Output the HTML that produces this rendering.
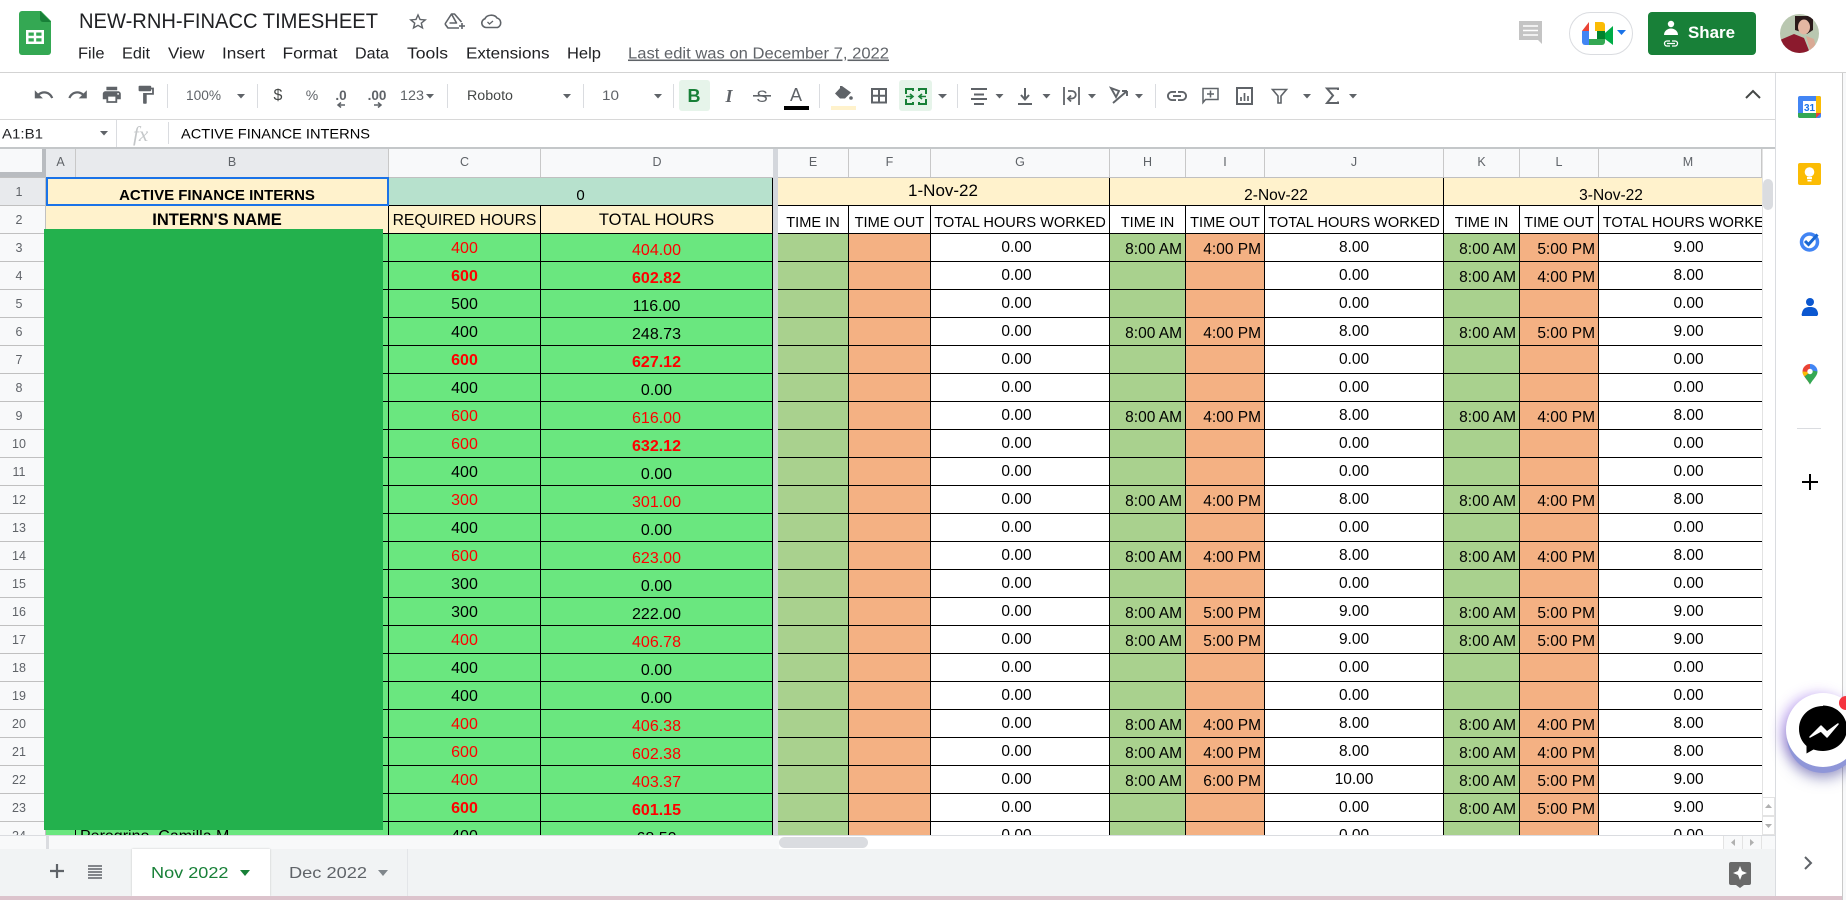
<!DOCTYPE html>
<html><head><meta charset="utf-8"><title>NEW-RNH-FINACC TIMESHEET</title>
<style>
*{box-sizing:border-box}
html,body{margin:0;padding:0;width:1846px;height:900px;overflow:hidden;background:#fff;font-family:"Liberation Sans",sans-serif;color:#000}
.a{position:absolute}
#rh{left:0;top:178px;width:46px;height:657px;overflow:hidden;background:#f8f9fa;border-right:1px solid #c0c0c0}
#rh div{height:28px;border-bottom:1px solid #c0c0c0;font-size:12.5px;color:#5f6368;line-height:28px;text-align:center;width:46px;padding-right:8px}
#ch{left:0;top:149px;width:1775px;height:29px;background:#f8f9fa;border-bottom:1px solid #c0c0c0;font-size:12.5px;color:#5f6368}
#ch div{position:absolute;top:0;height:28px;line-height:27px;text-align:center;border-right:1px solid #c8c8c8}
.tb{position:absolute;overflow:hidden}
table{border-collapse:separate;border-spacing:0;table-layout:fixed}
td{height:28px;padding:0;border-right:1px solid #000;border-bottom:1px solid #000;vertical-align:top;text-align:center;line-height:16px;overflow:hidden;white-space:nowrap}
#L td{font-size:16px;background:#6ae77f;padding-top:7px}
#L tr td:nth-child(4){padding-top:9px}
#L td.n{color:#000}
#L td.r{color:#f00}
#L td.b{color:#f00;font-weight:bold}
#L tr.h td{background:#fff2cc}
#L .bb{font-weight:bold}
#R td{font-size:15.5px;padding-top:8px;background:#fff}
#R tr td:nth-child(3n+1){background:#a9d18e;text-align:right;padding-right:3px}
#R tr td:nth-child(3n+2){background:#f4b183;text-align:right;padding-right:3px}
#R tr td:nth-child(3n){padding-top:6px}
#R tr td:nth-child(3){padding-right:7px}
#R tr.h1 td{background:#fff2cc!important;text-align:center!important;padding-right:1px!important;padding-top:10px!important;font-size:15.5px}
#R tr.h2 td{background:#fff!important;text-align:center!important;padding:9px 0 0!important;font-size:14.6px}
</style></head><body>

<div class="a" style="left:0;top:72px;width:1846px;height:1px;background:#d3d3d3"></div>
<div class="a" style="left:0;top:119px;width:1775px;height:1px;background:#d8d8d8"></div>
<div class="a" style="left:0;top:147px;width:1775px;height:2px;background:#c4c7c9"></div>
<div class="a" style="left:679px;top:80px;width:31px;height:31px;background:#e6f4ea;border-radius:3px"></div>
<div class="a" style="left:899px;top:80px;width:33px;height:31px;background:#e6f4ea;border-radius:3px"></div>
<div class="a" style="left:1648px;top:12px;width:108px;height:43px;background:#188038;border-radius:4px"></div>
<div class="a" style="left:1569px;top:12px;width:64px;height:43px;border:1px solid #dadce0;border-radius:22px"></div>

<div id="ch" class="a">
<div style="left:0;width:46px;background:#f8f9fa;border:0"></div>
<div style="left:46px;width:30px;background:#e8eaed">A</div>
<div style="left:76px;width:313px;background:#e8eaed">B</div>
<div style="left:389px;width:152px">C</div>
<div style="left:541px;width:232px;border-right:0">D</div>
<div style="left:778px;width:71px">E</div>
<div style="left:849px;width:82px">F</div>
<div style="left:931px;width:179px">G</div>
<div style="left:1110px;width:76px">H</div>
<div style="left:1186px;width:79px">I</div>
<div style="left:1265px;width:179px">J</div>
<div style="left:1444px;width:76px">K</div>
<div style="left:1520px;width:79px">L</div>
<div style="left:1599px;width:163px;padding-left:16px">M</div>
</div>
<div class="a" style="left:42px;top:149px;width:4px;height:28px;background:#b9bcc0"></div>
<div class="a" style="left:0;top:172px;width:46px;height:5px;background:#b9bcc0"></div>

<div id="rh" class="a">
<div style="background:#e8eaed">1</div><div>2</div><div>3</div><div>4</div><div>5</div><div>6</div><div>7</div><div>8</div><div>9</div><div>10</div><div>11</div><div>12</div><div>13</div><div>14</div><div>15</div><div>16</div><div>17</div><div>18</div><div>19</div><div>20</div><div>21</div><div>22</div><div>23</div><div>24</div>
</div>

<div id="L" class="tb" style="left:46px;top:178px;width:727px;height:657px">
<table style="width:727px"><colgroup><col style="width:30px"><col style="width:313px"><col style="width:152px"><col style="width:232px"></colgroup>
<tr class="h"><td colspan="2" class="bb" style="font-size:15px;padding-top:10px">ACTIVE FINANCE INTERNS</td><td colspan="2" style="background:#b7e1cd;padding-top:10px;font-size:15px">0</td></tr>
<tr class="h"><td colspan="2" class="bb" style="font-size:16.5px;padding-top:6px">INTERN'S NAME</td><td style="padding-top:7px;font-size:15.7px">REQUIRED HOURS</td><td style="padding-top:6px;font-size:16.5px">TOTAL HOURS</td></tr>
<tr><td></td><td></td><td class="r">400</td><td class="r">404.00</td></tr>
<tr><td></td><td></td><td class="b">600</td><td class="b">602.82</td></tr>
<tr><td></td><td></td><td class="n">500</td><td class="n">116.00</td></tr>
<tr><td></td><td></td><td class="n">400</td><td class="n">248.73</td></tr>
<tr><td></td><td></td><td class="b">600</td><td class="b">627.12</td></tr>
<tr><td></td><td></td><td class="n">400</td><td class="n">0.00</td></tr>
<tr><td></td><td></td><td class="r">600</td><td class="r">616.00</td></tr>
<tr><td></td><td></td><td class="r">600</td><td class="b">632.12</td></tr>
<tr><td></td><td></td><td class="n">400</td><td class="n">0.00</td></tr>
<tr><td></td><td></td><td class="r">300</td><td class="r">301.00</td></tr>
<tr><td></td><td></td><td class="n">400</td><td class="n">0.00</td></tr>
<tr><td></td><td></td><td class="r">600</td><td class="r">623.00</td></tr>
<tr><td></td><td></td><td class="n">300</td><td class="n">0.00</td></tr>
<tr><td></td><td></td><td class="n">300</td><td class="n">222.00</td></tr>
<tr><td></td><td></td><td class="r">400</td><td class="r">406.78</td></tr>
<tr><td></td><td></td><td class="n">400</td><td class="n">0.00</td></tr>
<tr><td></td><td></td><td class="n">400</td><td class="n">0.00</td></tr>
<tr><td></td><td></td><td class="r">400</td><td class="r">406.38</td></tr>
<tr><td></td><td></td><td class="r">600</td><td class="r">602.38</td></tr>
<tr><td></td><td></td><td class="r">400</td><td class="r">403.37</td></tr>
<tr><td></td><td></td><td class="b">600</td><td class="b">601.15</td></tr>
<tr><td style="border-right:1px solid #000"></td><td style="text-align:left;padding-left:4px">Peregrino, Camilla M.</td><td class="n">400</td><td class="n">68.50</td></tr>
</table>
</div>
<div class="a" style="left:46px;top:177px;width:343px;height:29px;border:2px solid #1a73e8"></div>
<div class="a" style="left:44px;top:229px;width:339px;height:601px;background:#23b14d"></div>
<div class="a" style="left:773px;top:149px;width:5px;height:686px;background:#d4d7dc"></div>

<div id="R" class="tb" style="left:778px;top:178px;width:984px;height:657px">
<table style="width:1001px"><colgroup><col style="width:71px"><col style="width:82px"><col style="width:179px"><col style="width:76px"><col style="width:79px"><col style="width:179px"><col style="width:76px"><col style="width:79px"><col style="width:180px"></colgroup>
<tr class="h1"><td colspan="3" style="font-size:17px;padding-top:5px!important">1-Nov-22</td><td colspan="3">2-Nov-22</td><td colspan="3" style="border-right:0">3-Nov-22</td></tr>
<tr class="h2"><td>TIME IN</td><td>TIME OUT</td><td>TOTAL HOURS WORKED</td><td>TIME IN</td><td>TIME OUT</td><td>TOTAL HOURS WORKED</td><td>TIME IN</td><td>TIME OUT</td><td>TOTAL HOURS WORKED</td></tr>
<tr><td></td><td></td><td>0.00</td><td>8:00 AM</td><td>4:00 PM</td><td>8.00</td><td>8:00 AM</td><td>5:00 PM</td><td>9.00</td></tr>
<tr><td></td><td></td><td>0.00</td><td></td><td></td><td>0.00</td><td>8:00 AM</td><td>4:00 PM</td><td>8.00</td></tr>
<tr><td></td><td></td><td>0.00</td><td></td><td></td><td>0.00</td><td></td><td></td><td>0.00</td></tr>
<tr><td></td><td></td><td>0.00</td><td>8:00 AM</td><td>4:00 PM</td><td>8.00</td><td>8:00 AM</td><td>5:00 PM</td><td>9.00</td></tr>
<tr><td></td><td></td><td>0.00</td><td></td><td></td><td>0.00</td><td></td><td></td><td>0.00</td></tr>
<tr><td></td><td></td><td>0.00</td><td></td><td></td><td>0.00</td><td></td><td></td><td>0.00</td></tr>
<tr><td></td><td></td><td>0.00</td><td>8:00 AM</td><td>4:00 PM</td><td>8.00</td><td>8:00 AM</td><td>4:00 PM</td><td>8.00</td></tr>
<tr><td></td><td></td><td>0.00</td><td></td><td></td><td>0.00</td><td></td><td></td><td>0.00</td></tr>
<tr><td></td><td></td><td>0.00</td><td></td><td></td><td>0.00</td><td></td><td></td><td>0.00</td></tr>
<tr><td></td><td></td><td>0.00</td><td>8:00 AM</td><td>4:00 PM</td><td>8.00</td><td>8:00 AM</td><td>4:00 PM</td><td>8.00</td></tr>
<tr><td></td><td></td><td>0.00</td><td></td><td></td><td>0.00</td><td></td><td></td><td>0.00</td></tr>
<tr><td></td><td></td><td>0.00</td><td>8:00 AM</td><td>4:00 PM</td><td>8.00</td><td>8:00 AM</td><td>4:00 PM</td><td>8.00</td></tr>
<tr><td></td><td></td><td>0.00</td><td></td><td></td><td>0.00</td><td></td><td></td><td>0.00</td></tr>
<tr><td></td><td></td><td>0.00</td><td>8:00 AM</td><td>5:00 PM</td><td>9.00</td><td>8:00 AM</td><td>5:00 PM</td><td>9.00</td></tr>
<tr><td></td><td></td><td>0.00</td><td>8:00 AM</td><td>5:00 PM</td><td>9.00</td><td>8:00 AM</td><td>5:00 PM</td><td>9.00</td></tr>
<tr><td></td><td></td><td>0.00</td><td></td><td></td><td>0.00</td><td></td><td></td><td>0.00</td></tr>
<tr><td></td><td></td><td>0.00</td><td></td><td></td><td>0.00</td><td></td><td></td><td>0.00</td></tr>
<tr><td></td><td></td><td>0.00</td><td>8:00 AM</td><td>4:00 PM</td><td>8.00</td><td>8:00 AM</td><td>4:00 PM</td><td>8.00</td></tr>
<tr><td></td><td></td><td>0.00</td><td>8:00 AM</td><td>4:00 PM</td><td>8.00</td><td>8:00 AM</td><td>4:00 PM</td><td>8.00</td></tr>
<tr><td></td><td></td><td>0.00</td><td>8:00 AM</td><td>6:00 PM</td><td>10.00</td><td>8:00 AM</td><td>5:00 PM</td><td>9.00</td></tr>
<tr><td></td><td></td><td>0.00</td><td></td><td></td><td>0.00</td><td>8:00 AM</td><td>5:00 PM</td><td>9.00</td></tr>
<tr><td></td><td></td><td>0.00</td><td></td><td></td><td>0.00</td><td></td><td></td><td>0.00</td></tr>
</table>
</div>

<!-- vertical scrollbar -->
<div class="a" style="left:1762px;top:149px;width:13px;height:686px;background:#fff;border-left:1px solid #e3e3e3"></div>
<div class="a" style="left:1763px;top:179px;width:10px;height:31px;background:#dadce0;border-radius:5px"></div>
<div class="a" style="left:1762px;top:797px;width:13px;height:19px;background:#fff;border:1px solid #e3e3e3"></div>
<div class="a" style="left:1762px;top:816px;width:13px;height:19px;background:#fff;border:1px solid #e3e3e3"></div>
<!-- horizontal scrollbar -->
<div class="a" style="left:0;top:835px;width:1775px;height:14px;background:#fff;border-top:1px solid #dadce0"></div>
<div class="a" style="left:0;top:836px;width:779px;height:13px;background:#f8f9fa"></div>
<div class="a" style="left:46px;top:836px;width:3px;height:13px;background:#dadce0"></div>
<div class="a" style="left:779px;top:837px;width:89px;height:11px;background:#dadce0;border-radius:6px"></div>
<div class="a" style="left:1723px;top:836px;width:20px;height:13px;border-left:1px solid #e3e3e3;background:#f8f9fa"></div>
<div class="a" style="left:1742px;top:836px;width:20px;height:13px;border-left:1px solid #e3e3e3;border-right:1px solid #e3e3e3;background:#f8f9fa"></div>
<div class="a" style="left:1762px;top:836px;width:13px;height:13px;background:#f8f9fa"></div>
<!-- tabs -->
<div class="a" style="left:0;top:849px;width:1775px;height:47px;background:#f1f3f4"></div>
<div class="a" style="left:132px;top:849px;width:138px;height:47px;background:#fff;box-shadow:0 0 2px rgba(0,0,0,.2)"></div>
<div class="a" style="left:407px;top:849px;width:1px;height:47px;background:#e3e5e8"></div>
<div class="a" style="left:0;top:896px;width:1846px;height:4px;background:#dcc3cc"></div>
<!-- side panel -->
<div class="a" style="left:1775px;top:73px;width:1px;height:823px;background:#dadce0"></div>
<div class="a" style="left:1842px;top:73px;width:1px;height:827px;background:#c9c9c9"></div>
<div class="a" style="left:1843px;top:73px;width:3px;height:827px;background:#f8f9fa"></div>
<div class="a" style="left:1797px;top:428px;width:24px;height:1px;background:#dadce0"></div>
<!-- messenger -->
<div class="a" style="left:1786px;top:693px;width:74px;height:74px;border-radius:50%;background:#fff;box-shadow:0 7px 0 -1px #8f96d8,0 11px 14px rgba(70,70,150,.55),-5px 0 12px rgba(160,110,240,.45)"></div>

<svg class="a" style="left:0;top:0;pointer-events:none" width="1846" height="900" viewBox="0 0 1846 900" font-family="Liberation Sans, sans-serif">
<!-- sheets logo -->
<path d="M19 14a3 3 0 0 1 3-3h19l10 10v31a3 3 0 0 1-3 3H22a3 3 0 0 1-3-3z" fill="#34a853"/>
<path d="M40 11l11 11H43a3 3 0 0 1-3-3z" fill="#188038"/>
<path fill-rule="evenodd" d="M26 30h18v14H26z M28.500 32.500v3.300h5.300v-3.300z M36.200 32.500v3.300h5.300v-3.300z M28.500 38.200v3.300h5.300v-3.300z M36.200 38.200v3.300h5.300v-3.300z" fill="#fff"/>
<text x="79" y="28" font-size="21" fill="#202124" textLength="299" lengthAdjust="spacingAndGlyphs">NEW-RNH-FINACC TIMESHEET</text>
<!-- star -->
<path transform="translate(407.200,11.500) scale(.9,.85)" fill="#5f6368" d="M22 9.240l-7.190-.62L12 2 9.190 8.630 2 9.240l5.460 4.730L5.820 21 12 17.270 18.180 21l-1.630-7.030L22 9.240zM12 15.400l-3.760 2.270 1-4.280-3.320-2.880 4.380-.38L12 6.100l1.710 4.040 4.380.38-3.320 2.880 1 4.280L12 15.400z"/>
<!-- drive add -->
<path d="M445 24l6.500-10h3l7 8M445 24l3 4h11M451.500 14l5 9h-7" fill="none" stroke="#5f6368" stroke-width="1.600" stroke-linejoin="round"/>
<path d="M459 26h6M462 23v6" stroke="#5f6368" stroke-width="1.600"/>
<!-- cloud -->
<path d="M486 27.500a4.500 4.500 0 0 1-1-8.800 6.500 5 0 0 1 12-.7 5 5 0 0 1 .5 9.500z" fill="none" stroke="#5f6368" stroke-width="1.600"/>
<path d="M487.500 22l2 2 3.500-3" fill="none" stroke="#5f6368" stroke-width="1.300"/>
<!-- menu -->
<g font-size="15.500" fill="#202124">
<text x="78" y="58.500" textLength="26.500" lengthAdjust="spacingAndGlyphs">File</text>
<text x="122" y="58.500" textLength="28" lengthAdjust="spacingAndGlyphs">Edit</text>
<text x="168" y="58.500" textLength="36.500" lengthAdjust="spacingAndGlyphs">View</text>
<text x="222" y="58.500" textLength="43" lengthAdjust="spacingAndGlyphs">Insert</text>
<text x="282.500" y="58.500" textLength="55" lengthAdjust="spacingAndGlyphs">Format</text>
<text x="355" y="58.500" textLength="34" lengthAdjust="spacingAndGlyphs">Data</text>
<text x="407" y="58.500" textLength="41" lengthAdjust="spacingAndGlyphs">Tools</text>
<text x="466" y="58.500" textLength="83.500" lengthAdjust="spacingAndGlyphs">Extensions</text>
<text x="567" y="58.500" textLength="34" lengthAdjust="spacingAndGlyphs">Help</text>
<text x="628" y="58.500" textLength="261" lengthAdjust="spacingAndGlyphs" fill="#5f6368" text-decoration="underline">Last edit was on December 7, 2022</text>
</g>
<!-- toolbar icons -->
<g fill="#5f6368">
<path transform="translate(33,84) scale(.9)" d="M12.500 8c-2.650 0-5.050.99-6.900 2.600L2 7v9h9l-3.620-3.620c1.390-1.160 3.160-1.880 5.120-1.880 3.540 0 6.550 2.310 7.600 5.500l2.370-.78C21.080 11.030 17.150 8 12.500 8z"/>
<path transform="translate(67,84) scale(.9)" d="M18.400 10.600C16.550 8.990 14.150 8 11.500 8c-4.650 0-8.580 3.030-9.960 7.220L3.900 16c1.050-3.190 4.050-5.500 7.600-5.500 1.950 0 3.730.72 5.120 1.880L13 16h9V7l-3.600 3.600z"/>
<path transform="translate(101,84) scale(.9)" d="M19 8H5c-1.660 0-3 1.340-3 3v6h4v4h12v-4h4v-6c0-1.660-1.340-3-3-3zm-3 11H8v-5h8v5zm3-7c-.55 0-1-.45-1-1s.45-1 1-1 1 .45 1 1-.45 1-1 1zm-1-9H6v4h12V3z"/>
<path transform="translate(135,84) scale(.9)" d="M18 4V3c0-.55-.45-1-1-1H5c-.55 0-1 .45-1 1v4c0 .55.45 1 1 1h12c.55 0 1-.45 1-1V6h1v4H9v11c0 .55.45 1 1 1h2c.55 0 1-.45 1-1v-9h8V4h-3z"/>
</g>
<g fill="#dadce0">
<rect x="167" y="84" width="1" height="24"/><rect x="257" y="84" width="1" height="24"/><rect x="447" y="84" width="1" height="24"/><rect x="583" y="84" width="1" height="24"/><rect x="673" y="84" width="1" height="24"/><rect x="819" y="84" width="1" height="24"/><rect x="957" y="84" width="1" height="24"/><rect x="1155" y="84" width="1" height="24"/>
</g>
<g font-size="13.500" fill="#5f6368">
<text x="186" y="100" textLength="35" lengthAdjust="spacingAndGlyphs">100%</text>
<text x="278" y="100" text-anchor="middle" font-size="16" fill="#444746">$</text>
<text x="312" y="100" text-anchor="middle" font-size="14">%</text>
<text x="341" y="100" text-anchor="middle" font-weight="bold">.0</text>
<text x="377" y="100" text-anchor="middle" font-weight="bold">.00</text>
<text x="400" y="100" textLength="24" lengthAdjust="spacingAndGlyphs">123</text>
<text x="467" y="100" textLength="46" lengthAdjust="spacingAndGlyphs" fill="#444746">Roboto</text>
<text x="602" y="100" textLength="17" lengthAdjust="spacingAndGlyphs">10</text>
</g>
<path d="M345 105h-7M341 102.500l-3 2.500 3 2.500M381 105h-7M378 102.500l3 2.500-3 2.500" fill="none" stroke="#5f6368" stroke-width="1.500"/>
<!-- carets -->
<g fill="#5f6368">
<path d="M237 94h8l-4 4.500z"/><path d="M426 94h8l-4 4.500z"/><path d="M563 94h8l-4 4.500z"/><path d="M654 94h8l-4 4.500z"/><path d="M938 94h9l-4.500 4.500z"/><path d="M995.500 94h8l-4 4.500z"/><path d="M1042.500 94h8l-4 4.500z"/><path d="M1088 94h8l-4 4.500z"/><path d="M1135 94h8l-4 4.500z"/><path d="M1303 94h8l-4 4.500z"/><path d="M1349 94h8l-4 4.500z"/>
<path d="M100 131h8l-4 4.500z"/>
</g>
<!-- B I S A -->
<text x="694" y="102" text-anchor="middle" font-size="18" font-weight="bold" fill="#188038">B</text>
<text x="729" y="102" text-anchor="middle" font-size="18" font-style="italic" font-family="Liberation Serif,serif" fill="#5f6368" font-weight="bold">I</text>
<text x="762" y="102" text-anchor="middle" font-size="17" fill="#5f6368">S</text>
<rect x="753" y="95" width="18" height="1.600" fill="#5f6368"/>
<text x="796" y="101" text-anchor="middle" font-size="18" fill="#5f6368">A</text>
<rect x="784" y="106" width="25" height="4" fill="#000"/>
<!-- fill -->
<path d="M842 86l9 6.500-6 6h-5l-5-5z" fill="#5f6368"/><path d="M841 86v4" stroke="#5f6368" stroke-width="2"/><circle cx="851" cy="98" r="1.800" fill="#5f6368"/>
<rect x="831" y="106" width="25" height="4" fill="#fff2cc"/>
<!-- borders -->
<path d="M872 89h14v13.500h-14zM879 89v13.500M872 95.700h14" fill="none" stroke="#5f6368" stroke-width="2"/>
<!-- merge -->
<path d="M906 94v-5h7v2M926 94v-5h-7v2M906 99v5h7v-2M926 99v5h-7v-2" fill="none" stroke="#188038" stroke-width="2"/>
<path d="M906 96.500h6M910 94l3 2.500-3 2.500M926 96.500h-6M922 94l-3 2.500 3 2.500" fill="none" stroke="#188038" stroke-width="1.600"/>
<!-- align -->
<path d="M971 89h16M974 94.500h10M971 99h16M974 104h10" stroke="#5f6368" stroke-width="2"/>
<path d="M1025 88v11M1021 95l4 4.500 4-4.500M1018 104h14" fill="none" stroke="#5f6368" stroke-width="2"/>
<path d="M1064 87v18M1079 87v18M1068 91h4a3.500 3.500 0 0 1 0 7.500h-3M1071 95.500l-3 3 3 3" fill="none" stroke="#5f6368" stroke-width="1.800"/>
<!-- rotate -->
<path d="M1111 88l5 9 3-6zM1111 88l0 0M1127 91l-14 12M1127 91l-5 0M1127 91l0 5" fill="none" stroke="#5f6368" stroke-width="1.900"/>
<!-- link, comment, chart, filter, sigma -->
<path transform="translate(1165,84)" fill="#5f6368" d="M3.900 12c0-1.710 1.390-3.100 3.100-3.100h4V7H7c-2.760 0-5 2.240-5 5s2.240 5 5 5h4v-1.900H7c-1.710 0-3.100-1.390-3.100-3.100zM8 13h8v-2H8v2zm9-6h-4v1.900h4c1.710 0 3.100 1.390 3.100 3.100s-1.390 3.100-3.100 3.100h-4V17h4c2.760 0 5-2.240 5-5s-2.240-5-5-5z"/>
<path d="M1203 88.500h15v11h-12.500l-2.500 3zM1210.500 90.500v7M1207 94h7" fill="none" stroke="#5f6368" stroke-width="1.500"/>
<rect x="1237" y="88" width="15" height="16" fill="none" stroke="#5f6368" stroke-width="2"/>
<path d="M1241 101v-4M1244.500 101v-8M1248 101v-5" stroke="#5f6368" stroke-width="1.700"/>
<path d="M1272.500 89.500h14l-5.500 6.500v7h-3v-7z" fill="none" stroke="#5f6368" stroke-width="1.600"/>
<path d="M1338 90v-1.500h-11l6 7-6 7.500h11v-1.500" fill="none" stroke="#5f6368" stroke-width="2"/>
<path d="M1746 98l7-7 7 7" fill="none" stroke="#444746" stroke-width="2"/>
<!-- formula bar -->
<text x="2" y="138.500" font-size="14" fill="#202124" textLength="41" lengthAdjust="spacingAndGlyphs">A1:B1</text>
<rect x="116" y="120" width="1" height="27" fill="#dadce0"/>
<text x="133" y="141" font-size="21" font-style="italic" font-family="Liberation Serif,serif" fill="#c4c7c9">fx</text>
<rect x="168" y="122" width="1" height="22" fill="#dadce0"/>
<text x="181" y="138.500" font-size="14" fill="#000" textLength="189" lengthAdjust="spacingAndGlyphs">ACTIVE FINANCE INTERNS</text>
<!-- comment history -->
<path d="M1519 21h23v23l-4-4h-19z" fill="#c4c4c4"/>
<path d="M1523 26h15M1523 30.500h15M1523 35h15" stroke="#fff" stroke-width="1.600"/>
<!-- meet -->
<path d="M1589 22h13a3 3 0 0 1 3 3v6h-10v-9z" fill="#fbbc04"/>
<path d="M1589 22v9h-7z" fill="#ea4335"/>
<path d="M1582 31h7v14h-4a3 3 0 0 1-3-3z" fill="#4285f4"/>
<path d="M1589 39h16v3a3 3 0 0 1-3 3h-13z" fill="#34a853"/>
<path d="M1597 31h8v8h-8z" fill="#00832d"/>
<path d="M1605 33l8-7v19l-8-6z" fill="#00ac47"/>
<path d="M1589 31h8v8h-8z" fill="#fff"/>
<path d="M1617 30h9l-4.500 5z" fill="#1a73e8"/>
<!-- share -->
<circle cx="1671" cy="24" r="3.200" fill="#fff"/>
<path d="M1664 35a7 6.500 0 0 1 14 0z" fill="#fff"/>
<path d="M1670 41h-3a2.500 2.500 0 0 0 0 5h3M1672 41h3a2.500 2.500 0 0 1 0 5h-3M1667 43.500h8" fill="none" stroke="#fff" stroke-width="1.300"/>
<text x="1688" y="38" font-size="16.500" font-weight="bold" fill="#fff" textLength="47" lengthAdjust="spacingAndGlyphs">Share</text>
<!-- avatar -->
<clipPath id="av"><circle cx="1799.500" cy="33.500" r="19.500"/></clipPath>
<g clip-path="url(#av)">
<rect x="1780" y="14" width="39" height="39" fill="#b9c7b0"/>
<path d="M1795 16h18v14l-6 4-12-4z" fill="#2a1a1a"/>
<ellipse cx="1804" cy="27" rx="6" ry="7.500" fill="#e4b6a2"/>
<path d="M1780 40l14-6 10 4 6 15h-30z" fill="#8b1a2d"/>
<path d="M1806 36l8 3 3 14h-6z" fill="#d9a994"/>
</g>
<!-- side icons -->
<rect x="1798" y="96" width="23" height="22" rx="2" fill="#4285f4"/>
<rect x="1803" y="101" width="13" height="12" fill="#fff"/>
<path d="M1816 96h3a2 2 0 0 1 2 2v15h-5z" fill="#fbbc04"/>
<path d="M1798 113h18v5h-16a2 2 0 0 1-2-2z" fill="#34a853"/>
<path d="M1816 118l5-5h-5z" fill="#ea4335"/>
<text x="1809.500" y="111" font-size="10" text-anchor="middle" fill="#1a73e8" font-weight="bold">31</text>
<rect x="1798" y="163" width="23" height="22" rx="2" fill="#fbbc04"/>
<circle cx="1809.500" cy="172" r="4.800" fill="#fff"/><rect x="1807" y="177" width="5" height="2.200" fill="#fff"/><rect x="1807.500" y="180" width="4" height="1.500" fill="#fff"/>
<circle cx="1809.500" cy="242" r="8" fill="none" stroke="#4285f4" stroke-width="3.500"/>
<path d="M1805 241l3.500 3.500 9-10" fill="none" stroke="#1967d2" stroke-width="3"/>
<circle cx="1810" cy="302" r="4" fill="#0b57d0"/>
<path d="M1802 316a3 3 0 0 1 0-3c1-5 4-6 8-6s7 1 8 6a3 3 0 0 1-1 3z" fill="#0b57d0"/>
<path d="M1810 364a7.500 7.500 0 0 0-7.500 7.500c0 4.500 4.500 7.500 7.500 13z" fill="#ea4335"/>
<path d="M1810 364a7.500 7.500 0 0 1 7.500 7.500L1810 372z" fill="#4285f4"/>
<path d="M1802.500 371.500c0 2 1 3.500 2 5l5.500-4.500z" fill="#fbbc04"/>
<path d="M1817.500 371.500c0 4.500-4.500 7.500-7.500 13 -1-2-3-4.500-5.500-8l8-6z" fill="#34a853"/>
<circle cx="1810" cy="371.500" r="2.700" fill="#fff"/>
<path d="M1802 482h16M1810 474v16" stroke="#000" stroke-width="2"/>
<path d="M1805 857l6 6-6 6" fill="none" stroke="#5f6368" stroke-width="2"/>
<!-- messenger -->
<path d="M1823 706c-13.500 0-24 10-24 23 0 7 3 13 7.500 17v7.500l7-4c3 1 6 1.500 9.500 1.500 13.500 0 24-10 24-22.500s-10.500-23-24-23z" fill="#000"/>
<path d="M1810 737l11-11 6 6 11-8-11 13-6-6z" fill="#fff" stroke="#fff" stroke-width="1.500" stroke-linejoin="round"/>
<circle cx="1846" cy="703" r="7" fill="#f5333f"/>
<!-- bottom bar -->
<path d="M57 864v14M50 871h14" stroke="#5f6368" stroke-width="2.200"/>
<path d="M88 866h14M88 869h14M88 872h14M88 875h14M88 878h14" stroke="#5f6368" stroke-width="1.600"/>
<text x="151" y="878" font-size="16" fill="#188038" textLength="77.500" lengthAdjust="spacingAndGlyphs">Nov 2022</text>
<path d="M240 870h10l-5 6z" fill="#188038"/>
<text x="289" y="878" font-size="16" fill="#5f6368" textLength="78" lengthAdjust="spacingAndGlyphs">Dec 2022</text>
<path d="M378 870h10l-5 6z" fill="#80868b"/>
<path d="M1731 862h18a2 2 0 0 1 2 2v19a2 2 0 0 1-2 2h-5l-4 3-4-3h-5a2 2 0 0 1-2-2v-19a2 2 0 0 1 2-2z" fill="#696969"/>
<path d="M1740 866l2 5 5 2-5 2-2 5-2-5-5-2 5-2z" fill="#fff"/>
<!-- scroll arrows -->
<path d="M1765 808l3.500-4 3.500 4z" fill="#b0b0b0"/><path d="M1765 824l3.500 4 3.500-4z" fill="#b0b0b0"/>
<path d="M1735 839l-4 3.500 4 3.500z" fill="#b0b0b0"/><path d="M1750 839l4 3.500-4 3.500z" fill="#b0b0b0"/>
</svg>
</body></html>
